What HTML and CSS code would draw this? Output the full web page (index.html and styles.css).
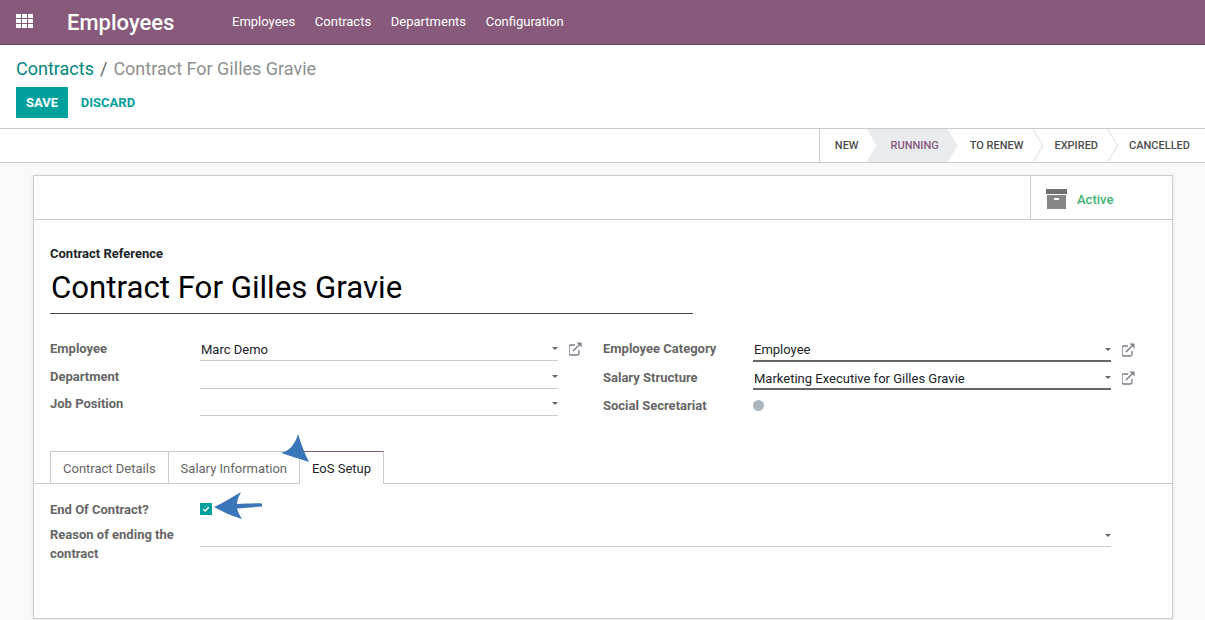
FILE: index.html
```html
<!DOCTYPE html>
<html lang="en">
<head>
	<meta charset="UTF-8">
	<title>Contract For Gilles Gravie</title>
	<link rel="stylesheet" href="styles.css">
</head>
<body>

<nav class="navbar">
	<svg class="apps" width="18" height="14" viewBox="0 0 18 14" fill="#fff">
		<rect x="0" y="0" width="5" height="4"/><rect x="6" y="0" width="5" height="4"/><rect x="12" y="0" width="5" height="4"/>
		<rect x="0" y="5" width="5" height="4"/><rect x="6" y="5" width="5" height="4"/><rect x="12" y="5" width="5" height="4"/>
		<rect x="0" y="10" width="5" height="4"/><rect x="6" y="10" width="5" height="4"/><rect x="12" y="10" width="5" height="4"/>
	</svg>
	<span class="brand">Employees</span>
	<ul class="menu">
		<li>Employees</li>
		<li>Contracts</li>
		<li>Departments</li>
		<li>Configuration</li>
	</ul>
</nav>

<div class="control-panel">
	<div class="breadcrumb"><a>Contracts</a><span class="sep">/</span><span class="current">Contract For Gilles Gravie</span></div>
	<div class="buttons">
		<button class="btn-save">SAVE</button>
		<button class="btn-discard">DISCARD</button>
	</div>
</div>

<div class="content">
	<div class="statusbar">
		<div class="stages">
			<div class="stage first">NEW</div>
			<div class="stage active">RUNNING</div>
			<div class="stage renew">TO RENEW</div>
			<div class="stage expired">EXPIRED</div>
			<div class="stage cancelled">CANCELLED</div>
		</div>
	</div>

	<div class="sheet">
		<div class="button-box">
			<div class="active-btn">
				<svg width="21" height="20" viewBox="0 0 21 20">
					<rect x="0" y="0" width="21" height="5" fill="#6f6f6f"/>
					<rect x="1" y="6" width="19" height="14" fill="#868686"/>
					<rect x="8" y="9" width="5" height="2" fill="#fff"/>
				</svg>
				<span class="active-text">Active</span>
			</div>
		</div>

		<div class="title-block">
			<label class="title-label">Contract Reference</label>
			<div class="title">Contract For Gilles Gravie</div>
		</div>

		<div class="columns">
			<div class="col">
				<div class="row">
					<label>Employee</label>
					<div class="field">Marc Demo<i class="caret"></i></div>
					<svg class="ext" width="14" height="14" viewBox="0 0 14 14"><use href="#ext-icon"/></svg>
				</div>
				<div class="row">
					<label>Department</label>
					<div class="field"><i class="caret"></i></div>
					<span class="ext"></span>
				</div>
				<div class="row">
					<label>Job Position</label>
					<div class="field"><i class="caret"></i></div>
					<span class="ext"></span>
				</div>
			</div>
			<div class="col col-right">
				<div class="row">
					<label>Employee Category</label>
					<div class="field required">Employee<i class="caret"></i></div>
					<svg class="ext" width="14" height="14" viewBox="0 0 14 14"><use href="#ext-icon"/></svg>
				</div>
				<div class="row">
					<label>Salary Structure</label>
					<div class="field required">Marketing Executive for Gilles Gravie<i class="caret"></i></div>
					<svg class="ext" width="14" height="14" viewBox="0 0 14 14"><use href="#ext-icon"/></svg>
				</div>
				<div class="row">
					<label>Social Secretariat</label>
					<div class="dot-wrap"><i class="dot"></i></div>
				</div>
			</div>
		</div>

		<ul class="tabs">
			<li>Contract Details</li>
			<li>Salary Information</li>
			<li class="active">EoS Setup</li>
		</ul>

		<div class="tab-body">
			<div class="tab-row">
				<label>End Of Contract?</label>
				<span class="check">
					<svg width="12" height="12" viewBox="0 0 12 12"><path d="M3.2 6.2 5.2 8 8.8 4.2" fill="none" stroke="#fff" stroke-width="1.5"/></svg>
				</span>
			</div>
			<div class="tab-row reason">
				<label>Reason of ending the contract</label>
				<div class="field"><i class="caret"></i></div>
			</div>
		</div>
	</div>
</div>

<!-- panah biru di atas screenshot -->
<svg class="arrow arrow-tab" width="40" height="40" viewBox="0 0 40 40">
	<path d="M18 2C21 12 25 22 29 30 20 27 10 24 1 21 9 19 15 13 18 2Z" fill="#3a76b9"/>
</svg>
<svg class="arrow arrow-check" width="60" height="40" viewBox="0 0 60 40">
	<path d="M4 19C13 15 22 9 31 4 29 8 27 12 27 16 35 16 44 15 52 15.500L52 18.500C44 19 35 20 27 20.500 28 24 30 28 32 31 22 28 13 24 4 19Z" fill="#3a76b9"/>
</svg>

<svg width="0" height="0" class="defs">
	<symbol id="ext-icon" viewBox="1 0 14 14">
		<path d="M11 8v3.2c0 1-.7 1.8-1.7 1.8H2.7C1.7 13 1 12.2 1 11.2V4.8C1 3.800 1.700 3 2.700 3H7" fill="none" stroke="#7c7c88" stroke-width="1.300"/>
		<path d="M5 9 11 3" fill="none" stroke="#7c7c88" stroke-width="1.500"/>
		<path d="M8.500 0.500H13.500V5.500Z" fill="#7c7c88"/>
	</symbol>
</svg>

</body>
</html>
```

FILE: styles.css
```css
* {
	margin: 0;
	padding: 0;
	box-sizing: border-box;
}

body {
	font-family: Roboto, sans-serif;
	font-size: 13px;
	color: #4c4c4c;
	background-color: #fff;
	height: 620px;
	overflow: hidden;
	position: relative;
}

/*navbar*/
.navbar {
	display: flex;
	align-items: center;
	height: 45px;
	background-color: #875a7b;
	border-bottom: 1px solid #6f4a65;
	color: #fff;
	padding-left: 16px;
}

.apps {
	margin-top: -3px;
}

.brand {
	font-size: 22px;
	font-weight: 500;
	margin-left: 33px;
	width: 165px;
}

.menu {
	display: flex;
	list-style: none;
	gap: 19.700px;
	margin-top: -1px;
}

/*control panel*/
.control-panel {
	height: 84px;
	padding: 13px 16px 0;
	border-bottom: 1px solid #ccc;
}

.breadcrumb {
	font-size: 18px;
	line-height: 21px;
	color: #8f8f8f;
}

.breadcrumb a {
	color: #00877e;
}

.breadcrumb .sep {
	color: #666;
	margin: 0 6px;
}

.buttons {
	display: flex;
	margin-top: 8px;
}

.buttons button {
	font-family: Roboto, sans-serif;
	font-size: 13px;
	font-weight: 700;
	height: 31px;
	border: none;
}

.btn-save {
	width: 52px;
	background-color: #00a09d;
	color: #fff;
}

.btn-discard {
	width: 80px;
	background: none;
	color: #00a09d;
}

/*content*/
.content {
	background-color: #f9f9f9;
	height: 491px;
}

.statusbar {
	display: flex;
	justify-content: flex-end;
	height: 34px;
	background-color: #fff;
	border-bottom: 1px solid #ccc;
}

.stages {
	display: flex;
	border-left: 1px solid #ccc;
}

.stage {
	position: relative;
	font-size: 11px;
	font-weight: 500;
	line-height: 33px;
	color: #4c4c4c;
}

.stage.first {
	padding: 0 8px 0 15px;
}

.stage.active {
	color: #875a7b;
	background-color: #e9ecef;
	padding: 0 19px 0 24px;
	clip-path: polygon(0 0, calc(100% - 10px) 0, 100% 50%, calc(100% - 10px) 100%, 0 100%, 10px 50%);
}

.stage.renew {
	padding: 0 9px 0 12px;
}

.stage.expired {
	padding: 0 9px 0 22px;
}

.stage.cancelled {
	padding: 0 15px 0 22px;
}

/*panah pemisah antar stage*/
.stage.expired::before,
.stage.cancelled::before {
	content: "";
	position: absolute;
	left: 0;
	top: 0;
	width: 11px;
	height: 33px;
	background-color: #ddd;
	clip-path: polygon(0 0, 1px 0, 100% 50%, 1px 100%, 0 100%, calc(100% - 1px) 50%);
}

/*sheet*/
.sheet {
	width: 1140px;
	height: 444px;
	margin: 12px 0 0 33px;
	background-color: #fff;
	border: 1px solid #ccc;
	box-shadow: 0 1px 4px rgba(0, 0, 0, 0.08);
}

.button-box {
	display: flex;
	justify-content: flex-end;
	height: 44px;
	border-bottom: 1px solid #ccc;
}

.active-btn {
	display: flex;
	align-items: center;
	width: 142px;
	padding: 2px 0 0 15px;
	gap: 10px;
	border-left: 1px solid #ccc;
	color: #3cb371;
	font-weight: 500;
}

.active-text {
	margin-top: 2px;
}

.title-block {
	padding: 26px 16px 0;
}

.title-label {
	display: block;
	font-size: 13px;
	font-weight: 700;
	color: #212529;
	line-height: 15px;
}

.title {
	width: 643px;
	height: 47px;
	margin-top: 6px;
	padding-left: 1px;
	font-size: 31.200px;
	line-height: 42px;
	color: #000;
	border-bottom: 1px solid #4c4c4c;
}

.columns {
	display: flex;
	padding: 19px 16px 0;
	gap: 20px;
}

.col {
	width: 533px;
}

.row {
	display: flex;
	align-items: flex-end;
	height: 27px;
}

.row:first-child {
	height: 27.500px;
}

.row:nth-child(2) {
	height: 28px;
}

.col-right .row {
	height: 28.500px;
}

.row label,
.tab-row label {
	width: 150px;
	font-weight: 700;
	font-size: 13px;
	color: #666;
}

.row label {
	align-self: flex-start;
	padding-top: 8px;
}

.col:first-child .row:nth-child(3) label {
	padding-top: 7px;
}

.field {
	position: relative;
	flex: 1;
	height: 23px;
	line-height: 23px;
	padding-left: 1px;
	color: #212529;
	border-bottom: 1px solid #ccc;
}

.field.required {
	line-height: 21px;
	border-bottom: 2px solid #666;
}

.row:nth-child(2) .field.required {
	line-height: 23px;
}

.caret {
	position: absolute;
	right: 0;
	top: 9px;
	border-left: 3.500px solid transparent;
	border-right: 3.500px solid transparent;
	border-top: 3.500px solid #666;
}

.ext {
	width: 14px;
	height: 14px;
	margin-left: 11px;
	margin-bottom: 5px;
	flex-shrink: 0;
}

.dot-wrap {
	align-self: flex-start;
	padding-top: 10px;
}

.dot {
	display: block;
	width: 11px;
	height: 11px;
	border-radius: 50%;
	background-color: #adb5bd;
}

/*tabs*/
.tabs {
	display: flex;
	list-style: none;
	margin-top: 32px;
	padding-left: 16px;
	height: 33px;
	border-bottom: 1px solid #ccc;
}

.tabs li {
	height: 33px;
	line-height: 33px;
	padding: 0 12px;
	color: #666;
	border: 1px solid #ccc;
	border-bottom: none;
	margin-right: -1px;
}

.tabs li.active {
	position: relative;
	background-color: #fff;
	color: #212529;
	border-top: 1px solid #875a7b;
}

/*isi tab*/
.tab-body {
	padding: 16px 16px 0;
}

.tab-row {
	display: flex;
	width: 1061px;
}

.tab-row label {
	line-height: 19px;
}

.check {
	display: block;
	width: 12px;
	height: 12px;
	margin-top: 3px;
	background-color: #00a09d;
}

.check svg {
	display: block;
}

.reason {
	margin-top: 6px;
}

.reason .field {
	height: 22px;
}

/*panah*/
.arrow {
	position: absolute;
}

.arrow-tab {
	left: 280px;
	top: 432px;
}

.arrow-check {
	left: 210px;
	top: 488px;
}

.defs {
	position: absolute;
}
```
